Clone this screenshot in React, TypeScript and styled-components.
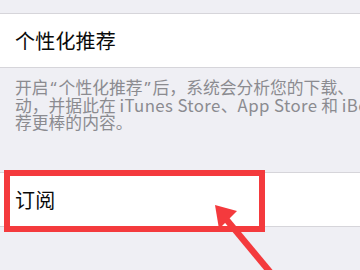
import React from "react";
import styled, { createGlobalStyle } from "styled-components";

const GlobalStyle = createGlobalStyle`
  html, body {
    margin: 0;
    padding: 0;
    background: #efeff4;
  }
  body {
    font-family: "Noto Sans CJK SC", "Noto Sans", "Liberation Sans", sans-serif;
    -webkit-font-smoothing: antialiased;
  }
`;

const Screen = styled.div`
  position: relative;
  width: 360px;
  height: 270px;
  overflow: hidden;
  background: #efeff4;
  padding-top: 13px;
  box-sizing: border-box;
`;

const Row = styled.div<{ $gapTop?: number }>`
  position: relative;
  box-sizing: border-box;
  height: 55px;
  margin-top: ${(p) => p.$gapTop ?? 0}px;
  background: #ffffff;
  border-top: 1px solid #d6d5da;
  border-bottom: 1px solid #d6d5da;
  display: flex;
  align-items: center;
  padding-left: 15px;
  font-size: 20px;
  color: #0a0a0a;
  letter-spacing: 0.2px;
`;

const Footer = styled.div`
  padding: 11px 0 0 15px;
  font-size: 16.8px;
  line-height: 17.5px;
  color: #8b8b90;
  white-space: nowrap;
  overflow: hidden;
`;

const Line = styled.div`
  display: block;
  height: 17.5px;
`;

const Quote = styled.span`
  font-family: "Noto Sans", "Liberation Sans", sans-serif;
  margin: 0 2px;
`;

const Latin = styled.span`
  letter-spacing: 0.4px;
`;

const Highlight = styled.div`
  position: absolute;
  left: 4px;
  top: -3px;
  width: 261px;
  height: 62px;
  box-sizing: border-box;
  border: 6px solid #f43a3d;
  pointer-events: none;
`;

const Overlay = styled.svg`
  position: absolute;
  left: 0;
  top: 0;
  width: 360px;
  height: 270px;
  pointer-events: none;
`;

export default function App() {
  return (
    <>
      <GlobalStyle />
      <Screen lang="zh-CN">
        <Row>个性化推荐</Row>
        <Footer>
          <Line>
            开启<Quote>“</Quote>个性化推荐<Quote>”</Quote>后，系统会分析您的下载、
          </Line>
          <Line>
            动，并据此在 <Latin>iTunes Store</Latin>、<Latin>App Store</Latin> 和{" "}
            <Latin>iBooks</Latin> 中为您推
          </Line>
          <Line>荐更棒的内容。</Line>
        </Footer>
        <Row $gapTop={40.5}>
          订阅
          <Highlight />
        </Row>
        <Overlay viewBox="0 0 360 270">
          <line x1="226" y1="219" x2="280" y2="284" stroke="#f43a3d" strokeWidth="6.5" />
          <polygon points="215,205 219,229 237,211" fill="#f43a3d" />
        </Overlay>
      </Screen>
    </>
  );
}
